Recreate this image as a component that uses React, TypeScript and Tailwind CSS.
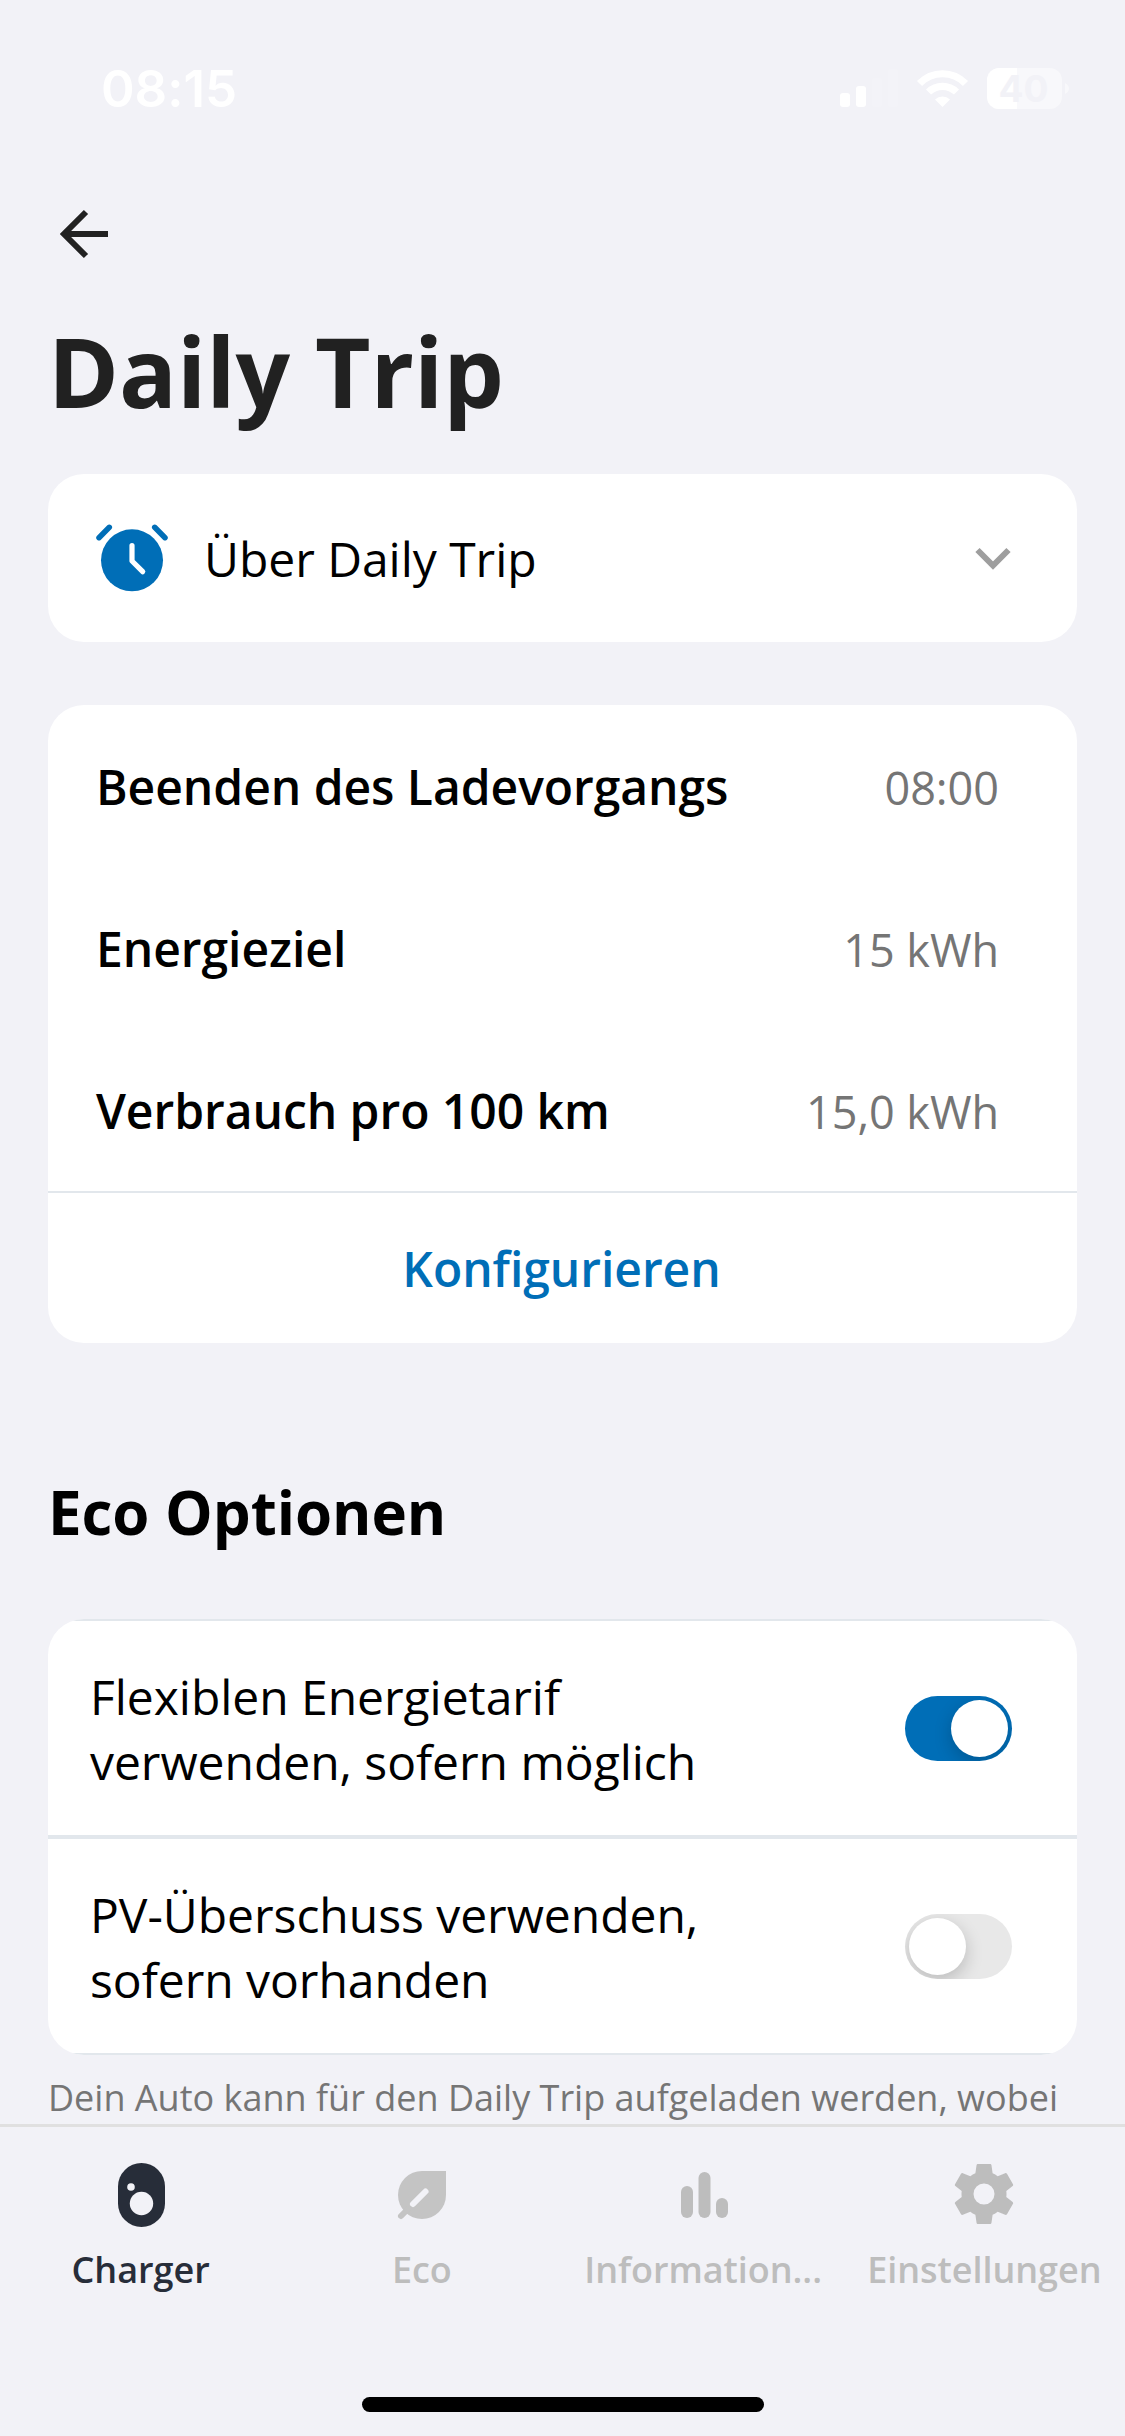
import type { ReactNode } from "react";

type RowProps = {
  label: string;
  value: string;
};

type OptionProps = {
  children: ReactNode;
  on?: boolean;
};

type TabProps = {
  label: string;
  icon: ReactNode;
  active?: boolean;
};

const StatusBar = () => (
  <header className="flex h-[141px] justify-between pt-[64px] pr-[56px] pl-[101px] text-white">
    <span className="font-[Inter,sans-serif] text-[51px] leading-[50px] font-semibold">
      08:15
    </span>

    <svg width="230" height="50" viewBox="0 0 230 50" fill="currentColor">
      <rect x="1" y="29" width="10" height="14" rx="3" />
      <rect x="17" y="22" width="10" height="21" rx="3" />
      <rect x="33" y="14" width="10" height="29" rx="3" opacity=".12" />
      <rect x="49" y="5" width="10" height="38" rx="3" opacity=".12" />
      <g fill="none" stroke="currentColor" strokeWidth="7.200">
        <path d="M80.500 19.500a32 32 0 0 1 46 0" />
        <path d="M89.500 28a20 20 0 0 1 28 0" />
      </g>
      <path d="M96 35.500a11 11 0 0 1 15 0L103.500 43z" />
      <rect x="148" y="4" width="75" height="41" rx="12" opacity=".45" />
      <path d="M160 4h18v41h-18a12 12 0 0 1-12-12V16a12 12 0 0 1 12-12z" />
      <path d="M226 19q4 2 4 5.500t-4 5.500z" opacity=".45" />
      <text
        x="184.500"
        y="38"
        textAnchor="middle"
        fill="#f2f2f7"
        className="font-[Inter,sans-serif] text-[37px] font-bold"
      >
        40
      </text>
    </svg>
  </header>
);

const ClockIcon = () => (
  <svg width="72" height="72" viewBox="0 0 72 72" fill="none" strokeLinecap="round">
    <circle cx="36" cy="38.300" r="31" fill="#006eb7" />
    <g stroke="#006eb7" strokeWidth="5.500">
      <path d="M3 15.700 13.300 5.300" />
      <path d="M69 15.700 58.700 5.300" />
    </g>
    <path d="M36 23.500V39l10.700 10.700" stroke="#fff" strokeWidth="5.200" strokeLinejoin="round" />
  </svg>
);

const Row = ({ label, value }: RowProps) => (
  <div className="flex h-[162px] items-center justify-between pr-[78px] pl-12">
    <span className="pt-[2px] text-[48px] font-semibold">{label}</span>
    <span className="pt-[3px] text-[45px] text-[#757575]">{value}</span>
  </div>
);

const Switch = ({ on }: { on?: boolean }) => (
  <div
    className={`flex h-[65px] w-[107px] overflow-hidden rounded-full p-1 ${
      on ? "justify-end bg-[#006eb7]" : "bg-[#e8e8e8]"
    }`}
  >
    <div className="size-[57px] rounded-full bg-white shadow-[0_6px_18px_rgba(0,0,0,0.2)]" />
  </div>
);

const Option = ({ children, on }: OptionProps) => (
  <div className="flex h-[218px] items-center justify-between border-y-2 border-[#e2e7ec] pr-[65px] pl-[42px]">
    <p className="pt-[2px] text-[48px] leading-[65px]">{children}</p>
    <Switch on={on} />
  </div>
);

const Tab = ({ label, icon, active }: TabProps) => (
  <div
    className={`flex w-1/4 flex-col items-center ${
      active ? "text-[#272d39]" : "text-[#bdbdbd]"
    }`}
  >
    {icon}
    <span className="mt-[16px] text-[36px] leading-[48px] font-semibold whitespace-nowrap">
      {label}
    </span>
  </div>
);

const ChargerIcon = () => (
  <svg width="72" height="72" viewBox="0 0 72 72" fill="currentColor">
    <rect x="13" y="5" width="47" height="64" rx="23.500" />
    <circle cx="36.500" cy="45.500" r="11.700" fill="#f2f2f7" />
    <circle cx="26" cy="29" r="3.800" fill="#f2f2f7" />
  </svg>
);

const LeafIcon = () => (
  <svg width="72" height="72" viewBox="0 0 72 72" fill="#c4c4c4" strokeWidth="6" strokeLinecap="round">
    <path d="M36 13h24v24a24 24 0 1 1-24-24z" />
    <path d="m15 58 8-8" stroke="#c4c4c4" />
    <path d="m27 46 12.500-12.500" stroke="#f2f2f7" />
  </svg>
);

const BarsIcon = () => (
  <svg width="72" height="72" viewBox="0 0 72 72" fill="currentColor">
    <rect x="14" y="28" width="12" height="32" rx="6" />
    <rect x="31.500" y="14" width="12" height="46" rx="6" />
    <rect x="49" y="40" width="12" height="20" rx="6" />
  </svg>
);

const GearIcon = () => (
  <svg width="72" height="72" viewBox="0 0 24 24" fill="currentColor">
    <path d="M19.430 12.980c.04-.32.07-.64.07-.98s-.03-.66-.07-.98l2.110-1.650c.19-.15.24-.42.12-.64l-2-3.460c-.12-.22-.39-.3-.61-.22l-2.490 1c-.52-.4-1.080-.73-1.690-.98l-.38-2.650C14.460 2.180 14.250 2 14 2h-4c-.25 0-.46.18-.49.42l-.38 2.650c-.61.25-1.170.59-1.690.98l-2.490-1c-.23-.09-.49 0-.61.22l-2 3.460c-.13.22-.07.49.12.64l2.110 1.650c-.04.32-.07.65-.07.98s.03.66.07.98l-2.110 1.650c-.19.15-.24.42-.12.64l2 3.460c.12.22.39.3.61.22l2.490-1c.52.4 1.080.73 1.690.98l.38 2.650c.03.24.24.42.49.42h4c.25 0 .46-.18.49-.42l.38-2.650c.61-.25 1.170-.59 1.690-.98l2.490 1c.23.09.49 0 .61-.22l2-3.460c.12-.22.07-.49-.12-.64l-2.110-1.650zM12 15.500A3.500 3.500 0 1 1 12 8.500a3.500 3.500 0 0 1 0 7z" />
  </svg>
);

const App = () => {
  return (
    <div className="flex h-[2436px] w-[1125px] flex-col overflow-hidden bg-[#f2f2f7] font-['Open_Sans',sans-serif] tracking-[-0.04px] text-black">
      <StatusBar />

      <main className="flex h-[1983px] flex-col overflow-hidden px-12">
        <svg width="72" height="72" viewBox="0 0 72 72" className="mt-[57px] shrink-0" fill="none" stroke="#212121" strokeWidth="6">
          <path d="M60 36H17M38 14 16 36l22 22" />
        </svg>

        <h1 className="mt-[36px] text-[96px] leading-[130px] font-bold text-[#212121]">
          Daily Trip
        </h1>

        <section className="mt-[38px] flex h-[168px] shrink-0 items-center rounded-[36px] bg-white pr-12 pl-12">
          <ClockIcon />
          <span className="ml-[36px] flex-1 pt-[2px] text-[48px]">Über Daily Trip</span>
          <svg width="72" height="72" viewBox="0 0 72 72" fill="none" stroke="#9e9e9e" strokeWidth="6">
            <path d="M20.500 28 36 43.500 51.500 28" />
          </svg>
        </section>

        <section className="mt-[63px] h-[638px] shrink-0 rounded-[36px] bg-white">
          <Row label="Beenden des Ladevorgangs" value="08:00" />
          <Row label="Energieziel" value="15 kWh" />
          <Row label="Verbrauch pro 100 km" value="15,0 kWh" />
          <button className="flex h-[152px] w-full items-center justify-center border-t-2 border-[#e2e7ec] pt-[2px] pr-[2px] text-[48px] font-semibold text-[#006eb7]">
            Konfigurieren
          </button>
        </section>

        <h2 className="mt-[128px] text-[60px] leading-[82px] font-bold">Eco Optionen</h2>

        <section className="mt-[66px] shrink-0 overflow-hidden rounded-[36px] bg-white">
          <Option on>
            Flexiblen Energietarif
            <br />
            verwenden, sofern möglich
          </Option>
          <Option>
            PV-Überschuss verwenden,
            <br />
            sofern vorhanden
          </Option>
        </section>

        <p className="mt-[18px] text-[36px] leading-[49px] tracking-normal whitespace-nowrap text-[#757575]">
          Dein Auto kann für den Daily Trip aufgeladen werden, wobei
        </p>
      </main>

      <nav className="flex h-[273px] border-t-3 border-[#e0e0e0] pt-[31px]">
        <Tab active label="Charger" icon={<ChargerIcon />} />
        <Tab label="Eco" icon={<LeafIcon />} />
        <Tab label="Information..." icon={<BarsIcon />} />
        <Tab label="Einstellungen" icon={<GearIcon />} />
      </nav>

      <div className="h-[15px] w-[402px] self-center rounded-full bg-black" />
    </div>
  );
};

export default App;
